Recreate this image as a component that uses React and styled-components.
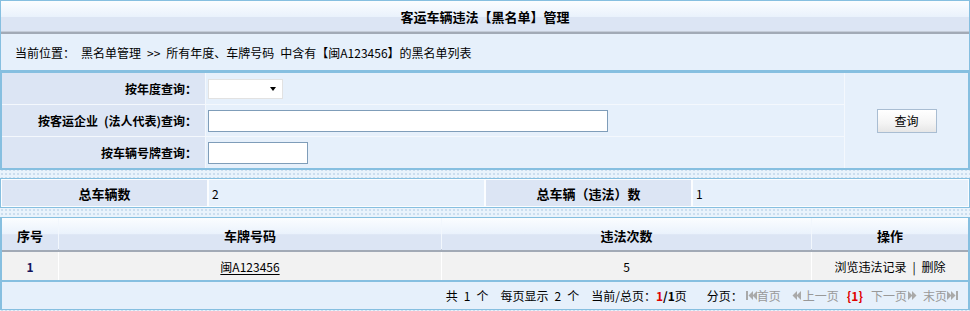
import React from "react";
import styled, { createGlobalStyle } from "styled-components";

const BLUE = "#86bfe0";
const LABEL_BG = "#dce5f4";
const FIELD_BG = "#e6f0fb";

const Global = createGlobalStyle`
  html, body { margin: 0; padding: 0; }
  body {
    background-color: #e9f3fc;
    background-image: radial-gradient(circle, #cadcee 0.7px, transparent 0.9px);
    background-size: 4px 4px;
    font-family: "Noto Sans CJK SC", "Liberation Sans", sans-serif;
    font-size: 12px;
    color: #000;
  }
`;

const Page = styled.div`
  width: 970px;
`;

const Panel = styled.div`
  border: 1px solid ${BLUE};
  background: ${FIELD_BG};
`;

const barGradient = `linear-gradient(to bottom, #fbfdff 0%, #eaf2fc 50%, #dce5f4 52%, #dce5f4 100%)`;

const TitleBar = styled.div`
  height: 31px;
  display: flex;
  align-items: center;
  justify-content: center;
  background: ${barGradient};
  font-size: 13px;
  font-weight: bold;
  border-bottom: 2px solid #a2aab6;
  box-shadow: inset 0 -1px 0 #c4ccd8;
`;

const Location = styled.div`
  height: 36px;
  display: flex;
  align-items: center;
  padding-left: 14px;
  white-space: pre;
`;

const FormBox = styled.div`
  border: 2px solid ${BLUE};
  background: #f4f8fd;
  display: grid;
  grid-template-columns: 203px 1fr 123px;
  grid-template-rows: repeat(3, 31px);
  gap: 1px;
`;

const Label = styled.div`
  background: ${LABEL_BG};
  display: flex;
  align-items: center;
  justify-content: ${(p) => (p.$center ? "center" : "flex-end")};
  padding-right: ${(p) => (p.$center ? "0" : "8px")};
  font-weight: bold;
  font-size: ${(p) => (p.$large ? "13px" : "12px")};
  white-space: pre;
`;

const Field = styled.div`
  background: ${FIELD_BG};
  display: flex;
  align-items: center;
  padding-left: ${(p) => p.$pad || 2}px;
`;

const ButtonCell = styled.div`
  grid-column: 3;
  grid-row: 1 / span 3;
  background: ${FIELD_BG};
  display: flex;
  align-items: center;
  justify-content: center;
`;

const SelectWrap = styled.div`
  position: relative;
  width: 75px;
  height: 20px;
  &::after {
    content: "";
    position: absolute;
    right: 7px;
    top: 8px;
    border-left: 3.5px solid transparent;
    border-right: 3.5px solid transparent;
    border-top: 4px solid #000;
    pointer-events: none;
  }
`;

const Select = styled.select`
  appearance: none;
  width: 75px;
  height: 20px;
  box-sizing: border-box;
  border: 1px solid #e2e2e2;
  background: #fff;
  font-size: 12px;
  outline: none;
`;

const TextInput = styled.input`
  box-sizing: border-box;
  width: ${(p) => p.$w}px;
  height: 22px;
  border: 1px solid #7f9db9;
  background: #fff;
  font-size: 12px;
  padding: 0 3px;
  outline: none;
`;

const Button = styled.button`
  width: 60px;
  height: 24px;
  box-sizing: border-box;
  border: 1px solid #a9bdd2;
  background: linear-gradient(to bottom, #ffffff 0%, #f4f4f4 60%, #e6e6e6 100%);
  font-family: inherit;
  font-size: 12px;
  color: #000;
  padding: 0;
`;

const StatsBox = styled.div`
  margin-top: 8px;
  border: 1px solid ${BLUE};
  background: #fbfdff;
  padding: 1px;
  display: grid;
  grid-template-columns: 205px 1fr 205px 1fr;
  grid-template-rows: 26px;
  column-gap: 2px;
`;

const TableBox = styled.div`
  margin-top: 9px;
  border: 1px solid ${BLUE};
  border-left-width: 2px;
  border-right-width: 2px;
  background: #fbfdff;
`;

const Row = styled.div`
  display: grid;
  grid-template-columns: 56px 382px 369px 1fr;
  column-gap: 1px;
  background: ${(p) => (p.$head ? "#f2f7fd" : "#ffffff")};
`;

const HeadRow = styled(Row)`
  height: 32px;
  border-bottom: 2px solid #a2aab6;
  box-shadow: 0 -1px 0 #c4ccd8 inset;
`;

const HeadCell = styled.div`
  background: ${barGradient};
  display: flex;
  align-items: center;
  justify-content: center;
  font-weight: bold;
  font-size: 13px;
  padding-top: 2px;
`;

const DataRow = styled(Row)`
  height: 28px;
  border-bottom: 2px solid ${BLUE};
`;

const Cell = styled.div`
  background: #f2f2f2;
  display: flex;
  align-items: center;
  justify-content: center;
  color: ${(p) => p.$color || "#000"};
  font-weight: ${(p) => (p.$bold ? "bold" : "normal")};
  white-space: pre;
`;

const Plate = styled.span`
  text-decoration: underline;
  text-underline-offset: 2px;
`;

const Pager = styled.div`
  height: 27px;
  background: ${FIELD_BG};
  display: flex;
  align-items: center;
  justify-content: flex-end;
  padding-right: 9px;
  white-space: pre;
`;

const Seg = styled.span`
  margin-left: ${(p) => p.$ml || 0}px;
  display: inline-flex;
  align-items: center;
`;

const Red = styled.b`
  color: #e00000;
`;

const Dim = styled.span`
  color: #999;
  display: inline-flex;
  align-items: center;
  margin-left: ${(p) => p.$ml || 0}px;
`;

const Icon = ({ kind }) => {
  const c = "#a9a9a9";
  const shapes = {
    first: (
      <>
        <rect x="1" y="1" width="2" height="9" fill={c} />
        <polygon points="8,1 3.5,5.5 8,10" fill={c} />
        <polygon points="12,1 7.5,5.5 12,10" fill={c} />
      </>
    ),
    prev: (
      <>
        <polygon points="6,1 1.5,5.5 6,10" fill={c} />
        <polygon points="10,1 5.5,5.5 10,10" fill={c} />
      </>
    ),
    next: (
      <>
        <polygon points="1,1 5.5,5.5 1,10" fill={c} />
        <polygon points="5,1 9.5,5.5 5,10" fill={c} />
      </>
    ),
    last: (
      <>
        <polygon points="0,1 4.5,5.5 0,10" fill={c} />
        <polygon points="4,1 8.5,5.5 4,10" fill={c} />
        <rect x="9" y="1" width="2" height="9" fill={c} />
      </>
    ),
  };
  return (
    <svg width="12" height="11" viewBox="0 0 12 11">
      {shapes[kind]}
    </svg>
  );
};

export default function App() {
  return (
    <Page>
      <Global />
      <Panel>
        <TitleBar>客运车辆违法【黑名单】管理</TitleBar>
        <Location>
          {"当前位置：\u2002黑名单管理\u2002>>\u2002所有年度、车牌号码\u2002中含有【闽A123456】的黑名单列表"}
        </Location>
      </Panel>

      <FormBox>
        <Label>按年度查询：</Label>
        <Field>
          <SelectWrap>
            <Select defaultValue="">
              <option value=""></option>
            </Select>
          </SelectWrap>
        </Field>
        <ButtonCell>
          <Button type="button">查询</Button>
        </ButtonCell>
        <Label>{"按客运企业\u2002(法人代表)查询："}</Label>
        <Field>
          <TextInput $w={400} />
        </Field>
        <Label>按车辆号牌查询：</Label>
        <Field>
          <TextInput $w={100} />
        </Field>
      </FormBox>

      <StatsBox>
        <Label $center $large>总车辆数</Label>
        <Field $pad={3}>2</Field>
        <Label $center $large>总车辆（违法）数</Label>
        <Field $pad={3}>1</Field>
      </StatsBox>

      <TableBox>
        <HeadRow $head>
          <HeadCell>序号</HeadCell>
          <HeadCell>车牌号码</HeadCell>
          <HeadCell>违法次数</HeadCell>
          <HeadCell>操作</HeadCell>
        </HeadRow>
        <DataRow>
          <Cell $bold $color="#14145e">1</Cell>
          <Cell>
            <Plate>闽A123456</Plate>
          </Cell>
          <Cell>5</Cell>
          <Cell>{"浏览违法记录\u2002|\u2002删除"}</Cell>
        </DataRow>
        <Pager>
          <Seg>{"共\u20021\u2002个"}</Seg>
          <Seg $ml={12}>{"每页显示\u20022\u2002个"}</Seg>
          <Seg $ml={12}>当前/总页：</Seg>
          <Seg>
            <Red>1</Red>
            <b>/1</b>页
          </Seg>
          <Seg $ml={20}>分页：</Seg>
          <Dim $ml={2}>
            <Icon kind="first" />
            首页
          </Dim>
          <Dim $ml={10}>
            <Icon kind="prev" />
            上一页
          </Dim>
          <Seg $ml={8}>
            <Red>{"{1}"}</Red>
          </Seg>
          <Dim $ml={8}>
            下一页
            <Icon kind="next" />
          </Dim>
          <Dim $ml={4}>
            末页
            <Icon kind="last" />
          </Dim>
        </Pager>
      </TableBox>
    </Page>
  );
}
